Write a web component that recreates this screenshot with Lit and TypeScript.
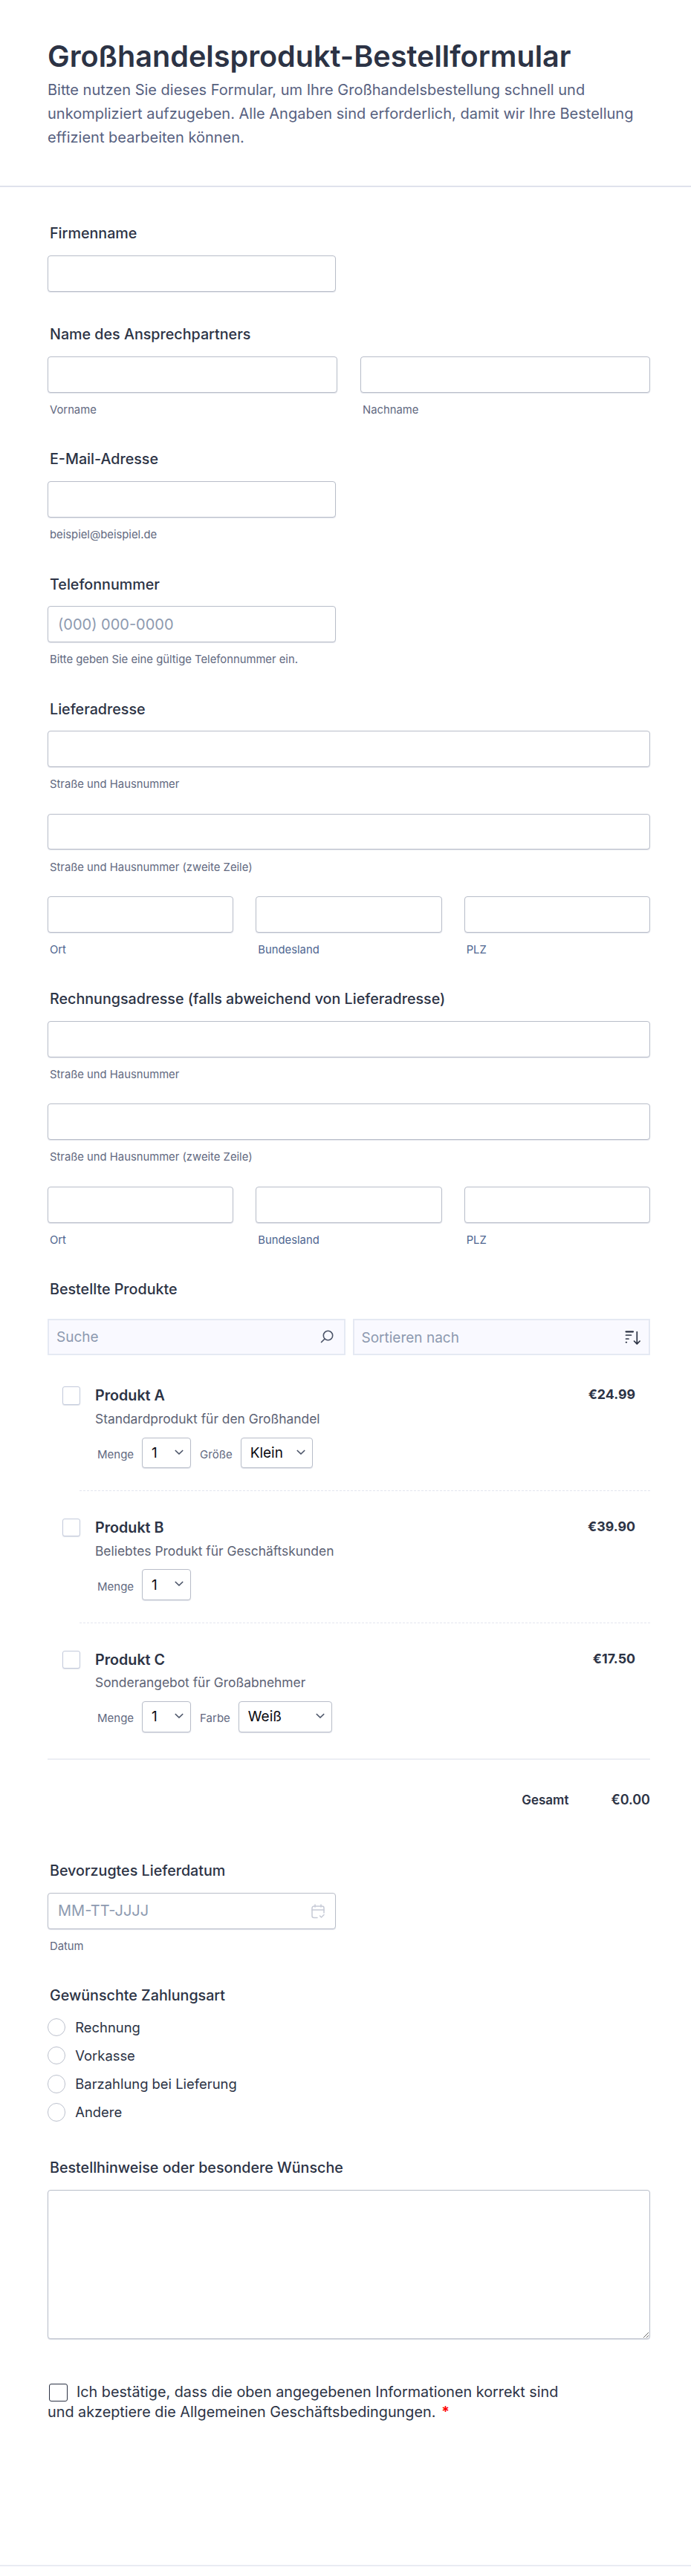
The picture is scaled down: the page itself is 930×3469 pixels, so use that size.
import { LitElement, html, css } from "lit";
import { customElement } from "lit/decorators.js";

const chevron = html`<svg class="chev" width="14" height="14" viewBox="0 0 14 14" fill="none"><path d="M2.300 4.500 7 9l4.700-4.500" stroke="#4b5468" stroke-width="1.7" stroke-linecap="round" stroke-linejoin="round"/></svg>`;

@customElement("app-root")
export class AppRoot extends LitElement {
  static styles = css`
    :host { display: flex; flex-direction: column; width: 930px; height: 3469px; background: #fff; font-family: Inter, "Liberation Sans", sans-serif; color: #2c3345; overflow: hidden; }
    * { box-sizing: border-box; }
    header { flex: none; height: 252px; border-bottom: 2px solid #dfe2ec; padding: 51.500px 64px 0; }
    h1 { margin: 0; font-size: 39.600px; line-height: 48px; font-weight: 600; color: #2c3345; }
    .desc { margin: 5.500px 0 0; font-size: 20px; line-height: 32px; color: #57617f; }
    main { flex: 1; padding: 0 55px 0 64px; display: flex; flex-direction: column; }
    footer { flex: none; height: 15px; border-top: 2px solid #e9ebf3; }
    .field { display: flex; flex-direction: column; margin-top: 46.600px; }
    .label { font-size: 19.700px; line-height: 22px; font-weight: 500; margin: 0 0 18.600px 3px; color: #2c3345; }
    .label.tight { margin-bottom: 19.600px; }
    .label.search { margin-bottom: 28.600px; }
    input.text { display: block; height: 48.800px; width: 100%; border: 1px solid #b8bdc9; border-radius: 4px; padding: 0 13px; font: 20px Inter, sans-serif; color: #2c3345; background: #fff; box-shadow: 0 1px 1px rgba(160,165,190,.3); outline: none; }
    input.text.half { width: 388px; }
    input.text::placeholder { color: #8d9ab0; }
    .sub { font-size: 14.800px; line-height: 16.900px; margin: 15.200px 0 0 3px; color: #62697f; }
    .sub.gap { margin-bottom: 30.500px; }
    .sub.blue { color: #4e6690; }
    .row { display: flex; gap: 31px; }
    .row > * { flex: 1 1 0; min-width: 0; margin-top: 0; }
    .row.three { gap: 30px; }
    .search-row { display: flex; gap: 10px; }
    .sbox { position: relative; flex: 1 1 0; height: 48.800px; }
    .sbox input { width: 100%; height: 100%; background: #f9f9ff; border: 2px solid #e5e9f3; padding: 0 50px 0 10px; font: 19px Inter, sans-serif; outline: none; color: #2c3345; }
    .sbox input.sort { padding: 3px 50px 0 10px; }
    .sbox input::placeholder { color: #8d9ab0; }
    .sbox .ic-search { position: absolute; right: 14.500px; top: 14.500px; }
    .sbox .ic-sort { position: absolute; right: 11.700px; top: 15px; }
    .product { display: flex; margin-left: 20px; }
    .cbx { flex: none; width: 24.300px; height: 24.300px; border: 1px solid #c3cadb; border-radius: 3px; background: #fff; box-shadow: 0 1px 1px rgba(160,165,190,.3); margin: 0; appearance: none; }
    .pbody { margin-left: 19.700px; flex: 1; }
    .ptop { display: flex; justify-content: space-between; padding-right: 20px; }
    .pname { font-size: 19.700px; line-height: 25px; font-weight: 600; color: #2c3345; }
    .price { font-size: 17.800px; line-height: 22px; font-weight: 700; color: #2c3345; }
    .pdesc { font-size: 17.400px; line-height: 24px; margin-top: 6.600px; color: #5d6375; }
    .opts { display: flex; align-items: center; margin: 12.900px 0 0 3px; height: 41.300px; }
    .opt-label { font-size: 15px; line-height: 16px; color: #62697f; margin-top: 5px; }
    .sel { position: relative; margin: 0 12px 0 11px; height: 41.300px; }
    .sel select { appearance: none; height: 100%; width: 100%; border: 1px solid #b8bdc9; border-radius: 4px; background: #fff; font: 19px Inter, sans-serif; color: #0b0b12; padding: 0 0 0 12px; box-shadow: 0 1px 1px rgba(160,165,190,.3); outline: none; }
    .sel .chev { position: absolute; right: 9px; top: 13px; pointer-events: none; }
    .w66 { width: 66px; }
    .w97 { width: 97px; }
    .w126 { width: 126px; }
    .dash { border: 0; border-top: 1px dashed #e3e6ef; margin: 30px 0 0 43px; }
    .solid { border: 0; border-top: 2px solid #eceef4; margin: 35px 0 0; }
    .total { display: flex; justify-content: flex-end; gap: 57px; align-items: baseline; margin-top: 43.200px; font-size: 18px; line-height: 22px; font-weight: 600; color: #2c3345; }
    .total .t { font-size: 17px; }
    .item-a { margin-top: 42.500px; }
    .item { margin-top: 37px; }
    .datebox { position: relative; width: 388px; }
    .datebox svg { position: absolute; right: 13.700px; top: 14.700px; }
    .f-date { margin-top: 73.500px; }
    .f-notes { margin-top: 51px; }
    .radios { display: flex; flex-direction: column; gap: 13.900px; }
    .radio { display: flex; align-items: center; gap: 13px; font-size: 18.400px; line-height: 24.300px; color: #2c3345; }
    .rc { width: 24.300px; height: 24.300px; border-radius: 50%; border: 1.500px solid #bcc1cd; background: #fff; appearance: none; margin: 0; flex: none; }
    textarea { display: block; width: 100%; height: 200.700px; border: 1px solid #b8bdc9; border-radius: 4px; box-shadow: 0 1px 1px rgba(160,165,190,.3); outline: none; background: #fff; font: 18px Inter, sans-serif; }
    .confirm { width: 700px; margin-top: 57.600px; font-size: 19.800px; line-height: 27.400px; color: #2c3345; }
    .confirm input { appearance: none; width: 25px; height: 24.300px; border: 1.500px solid #2c3345; border-radius: 3px; margin: 0 11.500px 0 2.400px; vertical-align: -6.700px; background: #fff; }
    .req { color: #ff0000; font-weight: 600; margin-left: 8px; }
  `;

  private address() {
    return html`
      <input class="text" aria-label="Straße" />
      <div class="sub gap">Straße und Hausnummer</div>
      <input class="text" aria-label="Straße 2" />
      <div class="sub gap">Straße und Hausnummer (zweite Zeile)</div>
      <div class="row three">
        ${["Ort", "Bundesland", "PLZ"].map((t) => html`<div class="field"><input class="text" aria-label=${t} /><div class="sub blue">${t}</div></div>`)}
      </div>`;
  }

  private product(name: string, price: string, desc: string, extra?: [string, string, string]) {
    return html`
      <div class="product">
        <input type="checkbox" class="cbx" aria-label=${name} />
        <div class="pbody">
          <div class="ptop"><div class="pname">${name}</div><div class="price">${price}</div></div>
          <div class="pdesc">${desc}</div>
          <div class="opts">
            <span class="opt-label">Menge</span>
            <span class="sel w66"><select aria-label="Menge"><option>1</option></select>${chevron}</span>
            ${extra
              ? html`<span class="opt-label">${extra[0]}</span>
                  <span class="sel ${extra[2]}"><select aria-label=${extra[0]}><option>${extra[1]}</option></select>${chevron}</span>`
              : ""}
          </div>
        </div>
      </div>`;
  }

  render() {
    return html`
      <header>
        <h1>Großhandelsprodukt-Bestellformular</h1>
        <p class="desc">Bitte nutzen Sie dieses Formular, um Ihre Großhandelsbestellung schnell und unkompliziert aufzugeben. Alle Angaben sind erforderlich, damit wir Ihre Bestellung effizient bearbeiten können.</p>
      </header>
      <main>
        <div class="field" style="margin-top:51.400px">
          <div class="label">Firmenname</div>
          <input class="text half" aria-label="Firmenname" />
        </div>
        <div class="field">
          <div class="label">Name des Ansprechpartners</div>
          <div class="row">
            <div class="field"><input class="text" aria-label="Vorname" /><div class="sub">Vorname</div></div>
            <div class="field"><input class="text" aria-label="Nachname" /><div class="sub">Nachname</div></div>
          </div>
        </div>
        <div class="field">
          <div class="label">E-Mail-Adresse</div>
          <input class="text half" aria-label="E-Mail" />
          <div class="sub">beispiel@beispiel.de</div>
        </div>
        <div class="field">
          <div class="label">Telefonnummer</div>
          <input class="text half" placeholder="(000) 000-0000" aria-label="Telefon" />
          <div class="sub">Bitte geben Sie eine gültige Telefonnummer ein.</div>
        </div>
        <div class="field">
          <div class="label">Lieferadresse</div>
          ${this.address()}
        </div>
        <div class="field">
          <div class="label">Rechnungsadresse (falls abweichend von Lieferadresse)</div>
          ${this.address()}
        </div>
        <div class="field">
          <div class="label search">Bestellte Produkte</div>
          <div class="search-row">
            <div class="sbox">
              <input placeholder="Suche" aria-label="Suche" />
              <svg class="ic-search" width="20" height="20" viewBox="0 0 20 20" fill="none" stroke="#4b5468" stroke-width="1.6" stroke-linecap="round"><circle cx="11.500" cy="8.500" r="6.200"/><path d="M7 13 2.500 17.500"/></svg>
            </div>
            <div class="sbox">
              <input class="sort" placeholder="Sortieren nach" aria-label="Sortieren nach" />
              <svg class="ic-sort" width="22" height="22" viewBox="0 0 22 22" fill="none" stroke="#2c3345" stroke-width="1.700" stroke-linecap="round" stroke-linejoin="round"><path d="M1.500 2.300h9.500" stroke-width="2.200"/><path d="M1.500 7h7M1.500 12h3.500M1.500 16.600h.8"/><path d="M16.300 2.500v16M12.500 15l3.800 3.800 3.800-3.800"/></svg>
            </div>
          </div>
        </div>
        <div class="item-a">
          ${this.product("Produkt A", "€24.99", "Standardprodukt für den Großhandel", ["Größe", "Klein", "w97"])}
          <hr class="dash" />
        </div>
        <div class="item">
          ${this.product("Produkt B", "€39.90", "Beliebtes Produkt für Geschäftskunden")}
          <hr class="dash" />
        </div>
        <div class="item">
          ${this.product("Produkt C", "€17.50", "Sonderangebot für Großabnehmer", ["Farbe", "Weiß", "w126"])}
        </div>
        <hr class="solid" />
        <div class="total"><span class="t">Gesamt</span><span>€0.00</span></div>
        <div class="field f-date">
          <div class="label">Bevorzugtes Lieferdatum</div>
          <div class="datebox">
            <input class="text" placeholder="MM-TT-JJJJ" aria-label="Datum" />
            <svg width="20" height="20" viewBox="0 0 20 20" fill="none" stroke="#c6cad6" stroke-width="1.500" stroke-linecap="round" stroke-linejoin="round"><path d="M9 18.500H4.500A2.500 2.500 0 0 1 2 16V5.500A2.500 2.500 0 0 1 4.500 3h11A2.500 2.500 0 0 1 18 5.500V12"/><path d="M2 8h16M6 1v3M14 1v3M12.500 16l2 2 3.500-3.500"/></svg>
          </div>
          <div class="sub">Datum</div>
        </div>
        <div class="field">
          <div class="label tight">Gewünschte Zahlungsart</div>
          <div class="radios">
            ${["Rechnung", "Vorkasse", "Barzahlung bei Lieferung", "Andere"].map((t) => html`<label class="radio"><input type="radio" class="rc" name="p" />${t}</label>`)}
          </div>
        </div>
        <div class="field f-notes">
          <div class="label tight">Bestellhinweise oder besondere Wünsche</div>
          <textarea aria-label="Bestellhinweise"></textarea>
        </div>
        <div class="confirm">
          <input type="checkbox" aria-label="Bestätigung" />Ich bestätige, dass die oben angegebenen Informationen korrekt sind und akzeptiere die Allgemeinen Geschäftsbedingungen.<span class="req">*</span>
        </div>
      </main>
      <footer></footer>
    `;
  }
}
